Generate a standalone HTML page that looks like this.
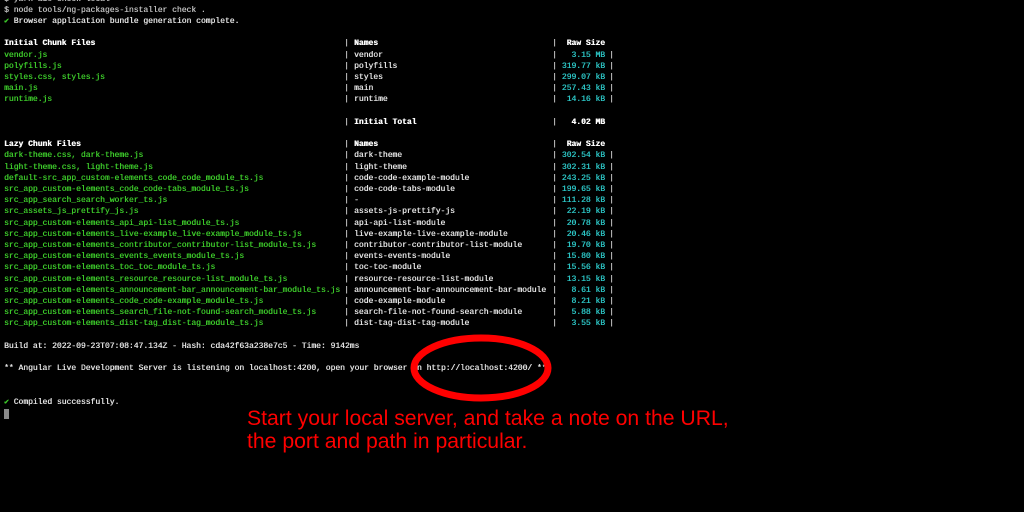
<!DOCTYPE html>
<html><head><meta charset="utf-8"><style>
html,body{margin:0;padding:0;background:#000;width:1024px;height:512px;overflow:hidden;position:relative}
.r{position:absolute;left:0;height:11.2px;line-height:11.2px;font-family:"Liberation Mono",monospace;font-size:8px;white-space:pre;color:#e0e0e0;width:1024px;text-shadow:0.35px 0 0 currentColor}
.r span{position:absolute;top:0}
.g{color:#3cc72a}.c{color:#2cc4c4}.b{color:#fff;font-weight:bold}.p{color:#bbb}
.note{position:absolute;left:247px;font-family:"Liberation Sans",sans-serif;font-size:21.2px;color:#f00;white-space:pre;line-height:23px}
</style></head><body>
<div class="r" style="top:-6.4px"><span style="left:4px" class="p">$ yarn aio-check-local</span></div>
<div class="r" style="top:4.8px"><span style="left:4px" class="p">$ node tools/ng-packages-installer check .</span></div>
<div class="r" style="top:16px"><span style="left:4px"><span class="g" style="position:static">✔</span> Browser application bundle generation complete.</span></div>
<div id="t"></div>
<div class="note" style="top:407px">Start your local server, and take a note on the URL,
the port and path in particular.</div>
<svg style="position:absolute;left:0;top:0" width="1024" height="512"><ellipse cx="481" cy="368" rx="67" ry="30" fill="none" stroke="#f00" stroke-width="7"/></svg>
<script>
var rows=[
[4,'Initial Chunk Files','Names','Raw Size',1],
[5,'vendor.js','vendor','3.15 MB'],
[6,'polyfills.js','polyfills','319.77 kB'],
[7,'styles.css, styles.js','styles','299.07 kB'],
[8,'main.js','main','257.43 kB'],
[9,'runtime.js','runtime','14.16 kB'],
[11,'','Initial Total','4.02 MB',2],
[13,'Lazy Chunk Files','Names','Raw Size',1],
[14,'dark-theme.css, dark-theme.js','dark-theme','302.54 kB'],
[15,'light-theme.css, light-theme.js','light-theme','302.31 kB'],
[16,'default-src_app_custom-elements_code_code_module_ts.js','code-code-example-module','243.25 kB'],
[17,'src_app_custom-elements_code_code-tabs_module_ts.js','code-code-tabs-module','199.65 kB'],
[18,'src_app_search_search_worker_ts.js','-','111.28 kB'],
[19,'src_assets_js_prettify_js.js','assets-js-prettify-js','22.19 kB'],
[20,'src_app_custom-elements_api_api-list_module_ts.js','api-api-list-module','20.78 kB'],
[21,'src_app_custom-elements_live-example_live-example_module_ts.js','live-example-live-example-module','20.46 kB'],
[22,'src_app_custom-elements_contributor_contributor-list_module_ts.js','contributor-contributor-list-module','19.70 kB'],
[23,'src_app_custom-elements_events_events_module_ts.js','events-events-module','15.80 kB'],
[24,'src_app_custom-elements_toc_toc_module_ts.js','toc-toc-module','15.56 kB'],
[25,'src_app_custom-elements_resource_resource-list_module_ts.js','resource-resource-list-module','13.15 kB'],
[26,'src_app_custom-elements_announcement-bar_announcement-bar_module_ts.js','announcement-bar-announcement-bar-module','8.61 kB'],
[27,'src_app_custom-elements_code_code-example_module_ts.js','code-example-module','8.21 kB'],
[28,'src_app_custom-elements_search_file-not-found-search_module_ts.js','search-file-not-found-search-module','5.88 kB'],
[29,'src_app_custom-elements_dist-tag_dist-tag_module_ts.js','dist-tag-dist-tag-module','3.55 kB']
];
var h='';
rows.forEach(function(r){
 var top=(-6.4+r[0]*11.2).toFixed(1);
 var t=r[4];
 var fc=t?'b':'g', nc=t?'b':'', sc=t?'b':'c';
 h+='<div class="r" style="top:'+top+'px">'+
 '<span style="left:4px" class="'+fc+'">'+r[1]+'</span>'+
 '<span style="left:344px" class="p">|</span>'+
 '<span style="left:354px" class="'+nc+'">'+r[2]+'</span>'+
 '<span style="left:552px" class="p">|</span>'+
 '<span style="right:419px" class="'+sc+'">'+r[3]+'</span>'+
 (t?'':'<span style="left:609px" class="p">|</span>')+'</div>';
});
h+='<div class="r" style="top:'+(-6.4+31*11.2)+'px"><span style="left:4px">Build at: 2022-09-23T07:08:47.134Z - Hash: cda42f63a238e7c5 - Time: 9142ms</span></div>';
h+='<div class="r" style="top:'+(-6.4+33*11.2)+'px"><span style="left:4px">** Angular Live Development Server is listening on localhost:4200, open your browser on http://localhost:4200/ **</span></div>';
h+='<div class="r" style="top:'+(-6.4+36*11.2)+'px"><span style="left:4px"><span class="g" style="position:static">✔</span> Compiled successfully.</span></div>';
h+='<div style="position:absolute;left:4px;top:'+(-6.4+37*11.2+1)+'px;width:5px;height:10px;background:#888"></div>';
document.getElementById('t').innerHTML=h;
</script>
</body></html>
